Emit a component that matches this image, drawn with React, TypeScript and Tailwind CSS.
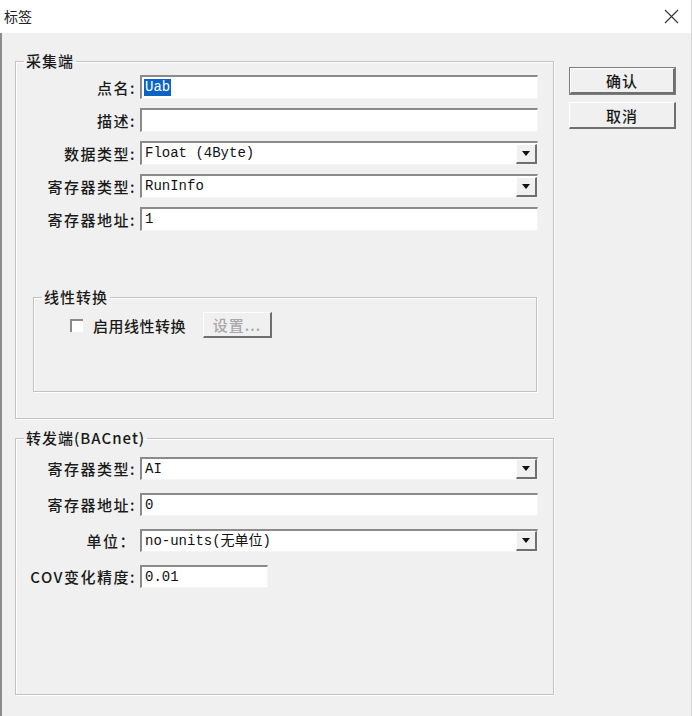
import React from "react";

const cjk = "font-['Noto_Sans_CJK_SC','Noto_Sans',sans-serif]";
const mono = "font-['Liberation_Mono','Noto_Sans_CJK_SC',monospace]";

const sunken =
  "bg-white border-t-2 border-l-2 border-t-[#8a8a8a] border-l-[#8a8a8a] border-b border-r border-b-[#f4f4f4] border-r-[#f4f4f4]";

const ArrowButton = () => (
  <div className="ml-auto flex h-[20px] w-[21px] items-center justify-center border-r-2 border-b-2 border-t border-l border-r-[#6f6f6f] border-b-[#6f6f6f] border-t-white border-l-white bg-[#f0f0f0]">
    <svg width="8" height="5" viewBox="0 0 8 5">
      <path d="M0 0 H8 L4 5 Z" fill="#111" />
    </svg>
  </div>
);

type FieldProps = {
  label: string;
  value?: string;
  combo?: boolean;
  selected?: boolean;
  width?: string;
  h?: string;
};

const Field = ({ label, value = "", combo, selected, width = "w-[398px]", h = "h-[24px]" }: FieldProps) => (
  <div className="flex items-center">
    <div className={`w-[120px] text-right text-[15px] leading-none font-medium tracking-[1.5px] text-[#1a1a1a] ${cjk}`}>{label}</div>
    <div className={`ml-[4px] flex items-center ${h} ${width} ${sunken}`}>
      <span className={`ml-[2px] px-[1px] text-[14px] leading-[17px] ${mono} ${selected ? "bg-[#0a64c8] text-white" : "text-[#111]"}`}>
        {value}
      </span>
      {combo && <ArrowButton />}
    </div>
  </div>
);

type GroupProps = {
  title: string;
  className?: string;
  children: React.ReactNode;
};

const Group = ({ title, className = "", children }: GroupProps) => (
  <fieldset className={`border border-[#c2c2c2] shadow-[inset_1px_1px_0_#fff,1px_1px_0_#fff] ${className}`}>
    <legend className={`ml-[8px] px-[2px] text-[15px] leading-[20px] font-medium tracking-[1px] text-[#1a1a1a] ${cjk}`}>{title}</legend>
    {children}
  </fieldset>
);

const WinButton = ({ text, isDefault, disabled, className = "" }: { text: string; isDefault?: boolean; disabled?: boolean; className?: string }) => (
  <div className={`${isDefault ? "border border-[#7d7d7d]" : ""} ${className}`}>
    <div
      className={`flex h-full w-full items-center justify-center border-t border-l border-r-2 border-b-2 border-t-white border-l-white border-r-[#6f6f6f] border-b-[#6f6f6f] bg-[#f0f0f0] text-[15px] leading-none font-medium tracking-[1px] ${cjk} ${disabled ? "text-[#a8a8a8]" : "text-[#1a1a1a]"}`}
    >
      {text}
    </div>
  </div>
);

export default function App() {
  return (
    <div className="flex h-[716px] w-[692px] flex-col bg-[#f0f0f0]">
      {/* title bar */}
      <div className="flex h-[33px] items-center border-r border-[#d8d8d8] bg-white pl-[4px] pr-[12px]">
        <span className={`text-[14px] text-[#222] ${cjk}`}>标签</span>
        <svg className="ml-auto" width="15" height="15" viewBox="0 0 15 15">
          <path d="M1 1 L14 14 M14 1 L1 14" stroke="#333" strokeWidth="1.1" />
        </svg>
      </div>

      <div className="flex flex-1 border-l-2 border-r border-l-[#8c8c8c] border-r-[#d8d8d8]">
        {/* left column */}
        <div className="flex flex-col pl-[13px] pt-[18px]">
          <Group title="采集端" className="h-[368px] w-[539px]">
            <div className="mt-[4px] flex flex-col gap-[9px]">
              <Field label="点名:" value="Uab" selected />
              <Field label="描述:" />
              <Field label="数据类型:" value="Float (4Byte)" combo />
              <Field label="寄存器类型:" value="RunInfo" combo />
              <Field label="寄存器地址:" value="1" />
            </div>
            <Group title="线性转换" className="ml-[17px] mt-[56px] h-[105px] w-[504px]">
              <div className="mt-[5px] flex items-center">
                <div className="ml-[36px] h-[13px] w-[13px] border-t-2 border-l-2 border-t-[#8a8a8a] border-l-[#8a8a8a] bg-white" />
                <span className={`ml-[10px] text-[15px] leading-none font-medium tracking-[0.5px] text-[#1a1a1a] ${cjk}`}>启用线性转换</span>
                <WinButton text="设置..." disabled className="ml-[17px] h-[26px] w-[69px]" />
              </div>
            </Group>
          </Group>

          <Group title="转发端(BACnet)" className="mt-[9px] h-[267px] w-[539px]">
            <div className="mt-[9px] flex flex-col gap-[13px]">
              <Field label="寄存器类型:" value="AI" combo h="h-[23px]" />
              <Field label="寄存器地址:" value="0" h="h-[23px]" />
              <Field label="单位：" value="no-units(无单位)" combo h="h-[23px]" />
              <Field label="COV变化精度:" value="0.01" width="w-[128px]" h="h-[23px]" />
            </div>
          </Group>
        </div>

        {/* right column */}
        <div className="ml-[15px] flex flex-col gap-[7px] pt-[34px]">
          <WinButton text="确认" isDefault className="h-[28px] w-[107px]" />
          <WinButton text="取消" className="h-[27px] w-[107px]" />
        </div>
      </div>
    </div>
  );
}
